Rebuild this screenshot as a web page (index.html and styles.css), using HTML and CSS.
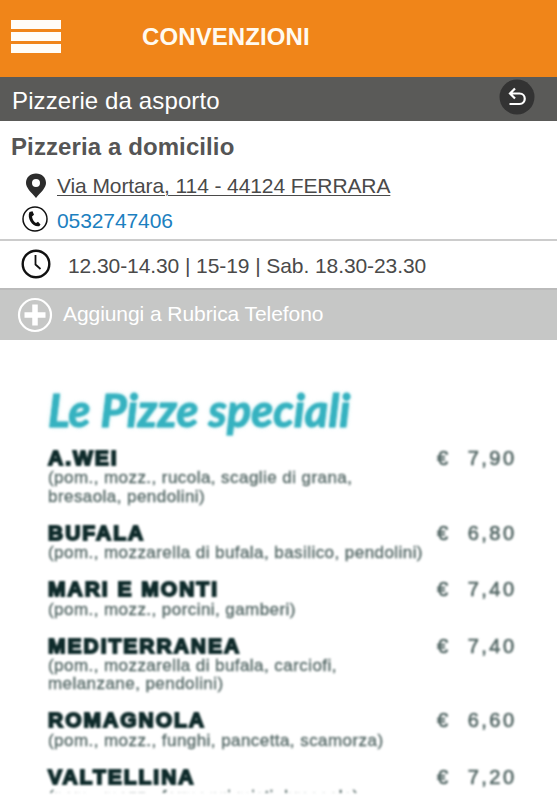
FILE: index.html
```html
<!DOCTYPE html>
<html lang="it">
<head>
  <meta charset="UTF-8">
  <meta name="viewport" content="width=device-width, initial-scale=1.0">
  <title>Convenzioni</title>
  <link rel="stylesheet" href="styles.css">
</head>
<body>

  <header class="topbar">
    <div class="menu-btn"><span></span><span></span><span></span></div>
    <h1>CONVENZIONI</h1>
  </header>

  <div class="category">
    <span>Pizzerie da asporto</span>
    <svg class="back" width="36" height="36" viewBox="0 0 36 36">
      <circle cx="18" cy="18" r="17.5" fill="#333"/>
      <path d="M16 9.5L11 14.5L16 19.5M11.5 14.5H20.5C27.5 14.5 27.5 25 20.5 25H10.5" fill="none" stroke="#fff" stroke-width="2.2"/>
    </svg>
  </div>

  <section class="info">
    <h2>Pizzeria a domicilio</h2>
    <div class="row address">
      <svg width="22" height="26" viewBox="0 0 22 26">
        <path fill-rule="evenodd" d="M11 0.5C5 0.5 1 4.5 1 10C1 15 6 19 11 25C16 19 21 15 21 10C21 4.5 17 0.5 11 0.5ZM11 6A4 4 0 1 1 11 14A4 4 0 1 1 11 6Z" fill="#2c2c2c"/>
      </svg>
      <a href="#">Via Mortara, 114 - 44124 FERRARA</a>
    </div>
    <div class="row phone">
      <svg width="26" height="26" viewBox="0 0 26 26">
        <circle cx="13" cy="13" r="12" fill="#fff" stroke="#111" stroke-width="1.5"/>
        <path d="M7.5 6L10.5 5.2L12 8.8L10 10.5C10.3 13.5 12 15.8 14 17L16 15.8L18.5 18.4L17.2 20.2C11 21.5 4.5 12.5 7.5 6Z" fill="#111"/>
      </svg>
      <a href="#">0532747406</a>
    </div>
  </section>

  <section class="hours">
    <svg width="30" height="30" viewBox="0 0 30 30">
      <circle cx="15" cy="15" r="13.3" fill="#fff" stroke="#111" stroke-width="2.4"/>
      <path d="M14.5 6V15.5L19.5 20" fill="none" stroke="#111" stroke-width="1.8"/>
    </svg>
    <span>12.30-14.30 | 15-19 | Sab. 18.30-23.30</span>
  </section>

  <div class="add">
    <svg width="36" height="36" viewBox="0 0 36 36">
      <circle cx="18" cy="18" r="16" fill="none" stroke="#fff" stroke-width="2.2"/>
      <path d="M18 7.5V28.5M7.5 18H28.5" stroke="#fff" stroke-width="5.5"/>
    </svg>
    <span>Aggiungi a Rubrica Telefono</span>
  </div>

  <section class="pizze">
    <h3>Le Pizze speciali</h3>
    <div class="pizza">
      <div class="line"><b>A.WEI</b><span class="price"><i>€</i>7,90</span></div>
      <p>(pom., mozz., rucola, scaglie di grana,<br>bresaola, pendolini)</p>
    </div>
    <div class="pizza">
      <div class="line"><b>BUFALA</b><span class="price"><i>€</i>6,80</span></div>
      <p>(pom., mozzarella di bufala, basilico, pendolini)</p>
    </div>
    <div class="pizza">
      <div class="line"><b>MARI E MONTI</b><span class="price"><i>€</i>7,40</span></div>
      <p>(pom., mozz., porcini, gamberi)</p>
    </div>
    <div class="pizza">
      <div class="line"><b>MEDITERRANEA</b><span class="price"><i>€</i>7,40</span></div>
      <p>(pom., mozzarella di bufala, carciofi,<br>melanzane, pendolini)</p>
    </div>
    <div class="pizza">
      <div class="line"><b>ROMAGNOLA</b><span class="price"><i>€</i>6,60</span></div>
      <p>(pom., mozz., funghi, pancetta, scamorza)</p>
    </div>
    <div class="pizza">
      <div class="line"><b>VALTELLINA</b><span class="price"><i>€</i>7,20</span></div>
      <p>(pom., mozz., formaggi misti, bresaola)</p>
    </div>
  </section>

</body>
</html>
```
FILE: styles.css
```css
* {
  box-sizing: border-box;
}

body {
  margin: 0;
  height: 800px;
  overflow: hidden;
  background: #fff;
  color: #555;
  font-family: "Liberation Sans", Arial, sans-serif;
}

h1, h2, h3, p {
  margin: 0;
}

svg {
  display: block;
  flex: none;
}

.topbar {
  height: 77px;
  display: flex;
  align-items: flex-start;
  padding: 20px 11px 0;
  background: #f08519;
}

.menu-btn {
  width: 50px;
  display: flex;
  flex-direction: column;
  gap: 3px;
}

.menu-btn span {
  height: 9px;
  background: #fffdf8;
}

.topbar h1 {
  margin-left: 81px;
  color: #fffaf0;
  font-size: 24px;
  line-height: 33px;
  letter-spacing: 0.1px;
}

.category {
  height: 44px;
  display: flex;
  align-items: center;
  justify-content: space-between;
  padding: 4px 22px 0 12px;
  background: #5a5a58;
  color: #fff;
  font-size: 24px;
  letter-spacing: 0.12px;
}

.back {
  margin-top: -8px;
}

.info {
  height: 120px;
  padding-top: 10px;
  border-bottom: 2px solid #ccc;
}

.info h2 {
  padding-left: 11px;
  font-size: 24px;
  line-height: 31px;
  letter-spacing: 0.1px;
}

.row {
  height: 34px;
  display: flex;
  align-items: center;
  padding-left: 22px;
  font-size: 21px;
}

.address {
  height: 40px;
  padding-left: 25px;
  padding-top: 8px;
}

.address a {
  margin-left: 10px;
  color: #4a4a4a;
  letter-spacing: -0.1px;
  text-decoration-thickness: 1px;
  text-underline-offset: 2px;
}

.phone a {
  margin-left: 9px;
  padding-top: 3px;
  color: #1c80c0;
  letter-spacing: -0.1px;
  text-decoration: none;
}

.hours {
  height: 49px;
  display: flex;
  align-items: center;
  gap: 17px;
  padding: 0 0 2px 21px;
  border-bottom: 2px solid #bbb;
  color: #4a4a4a;
  font-size: 21px;
  letter-spacing: -0.08px;
}

.hours span {
  padding-top: 4px;
}

.add {
  height: 50px;
  display: flex;
  align-items: center;
  gap: 10px;
  padding-left: 17px;
  background: #c6c7c6;
  color: #fff;
  font-size: 21px;
  letter-spacing: -0.07px;
}

.add span {
  margin-top: -2px;
}

.pizze {
  height: 453px;
  overflow: hidden;
  padding: 43px 41px 0 48px;
  filter: blur(0.8px);
}

.pizze h3 {
  height: 63px;
  color: #36b2c0;
  font-family: Lato, sans-serif;
  font-size: 45px;
  font-style: italic;
  line-height: 55px;
  letter-spacing: 0.1px;
  white-space: nowrap;
  -webkit-text-stroke: 1px #36b2c0;
  text-shadow: 0 0 4px #b5e6ea;
}

.pizza {
  margin-bottom: 15px;
}

.line {
  height: 23.3px;
  display: flex;
  justify-content: space-between;
  font-size: 21px;
  line-height: 24px;
}

.line b {
  color: #0f2b2b;
  letter-spacing: 2px;
  -webkit-text-stroke: 1.8px #0f2b2b;
}

.price {
  width: 79px;
  display: flex;
  gap: 17px;
  color: #506462;
  font-size: 20px;
  letter-spacing: 2.5px;
  white-space: nowrap;
  -webkit-text-stroke: 0.6px #506462;
}

.price i {
  font-style: normal;
}

.pizza p {
  color: #506462;
  font-size: 17px;
  line-height: 18.2px;
  letter-spacing: 0.44px;
  white-space: nowrap;
  -webkit-text-stroke: 0.3px #506462;
}
```
